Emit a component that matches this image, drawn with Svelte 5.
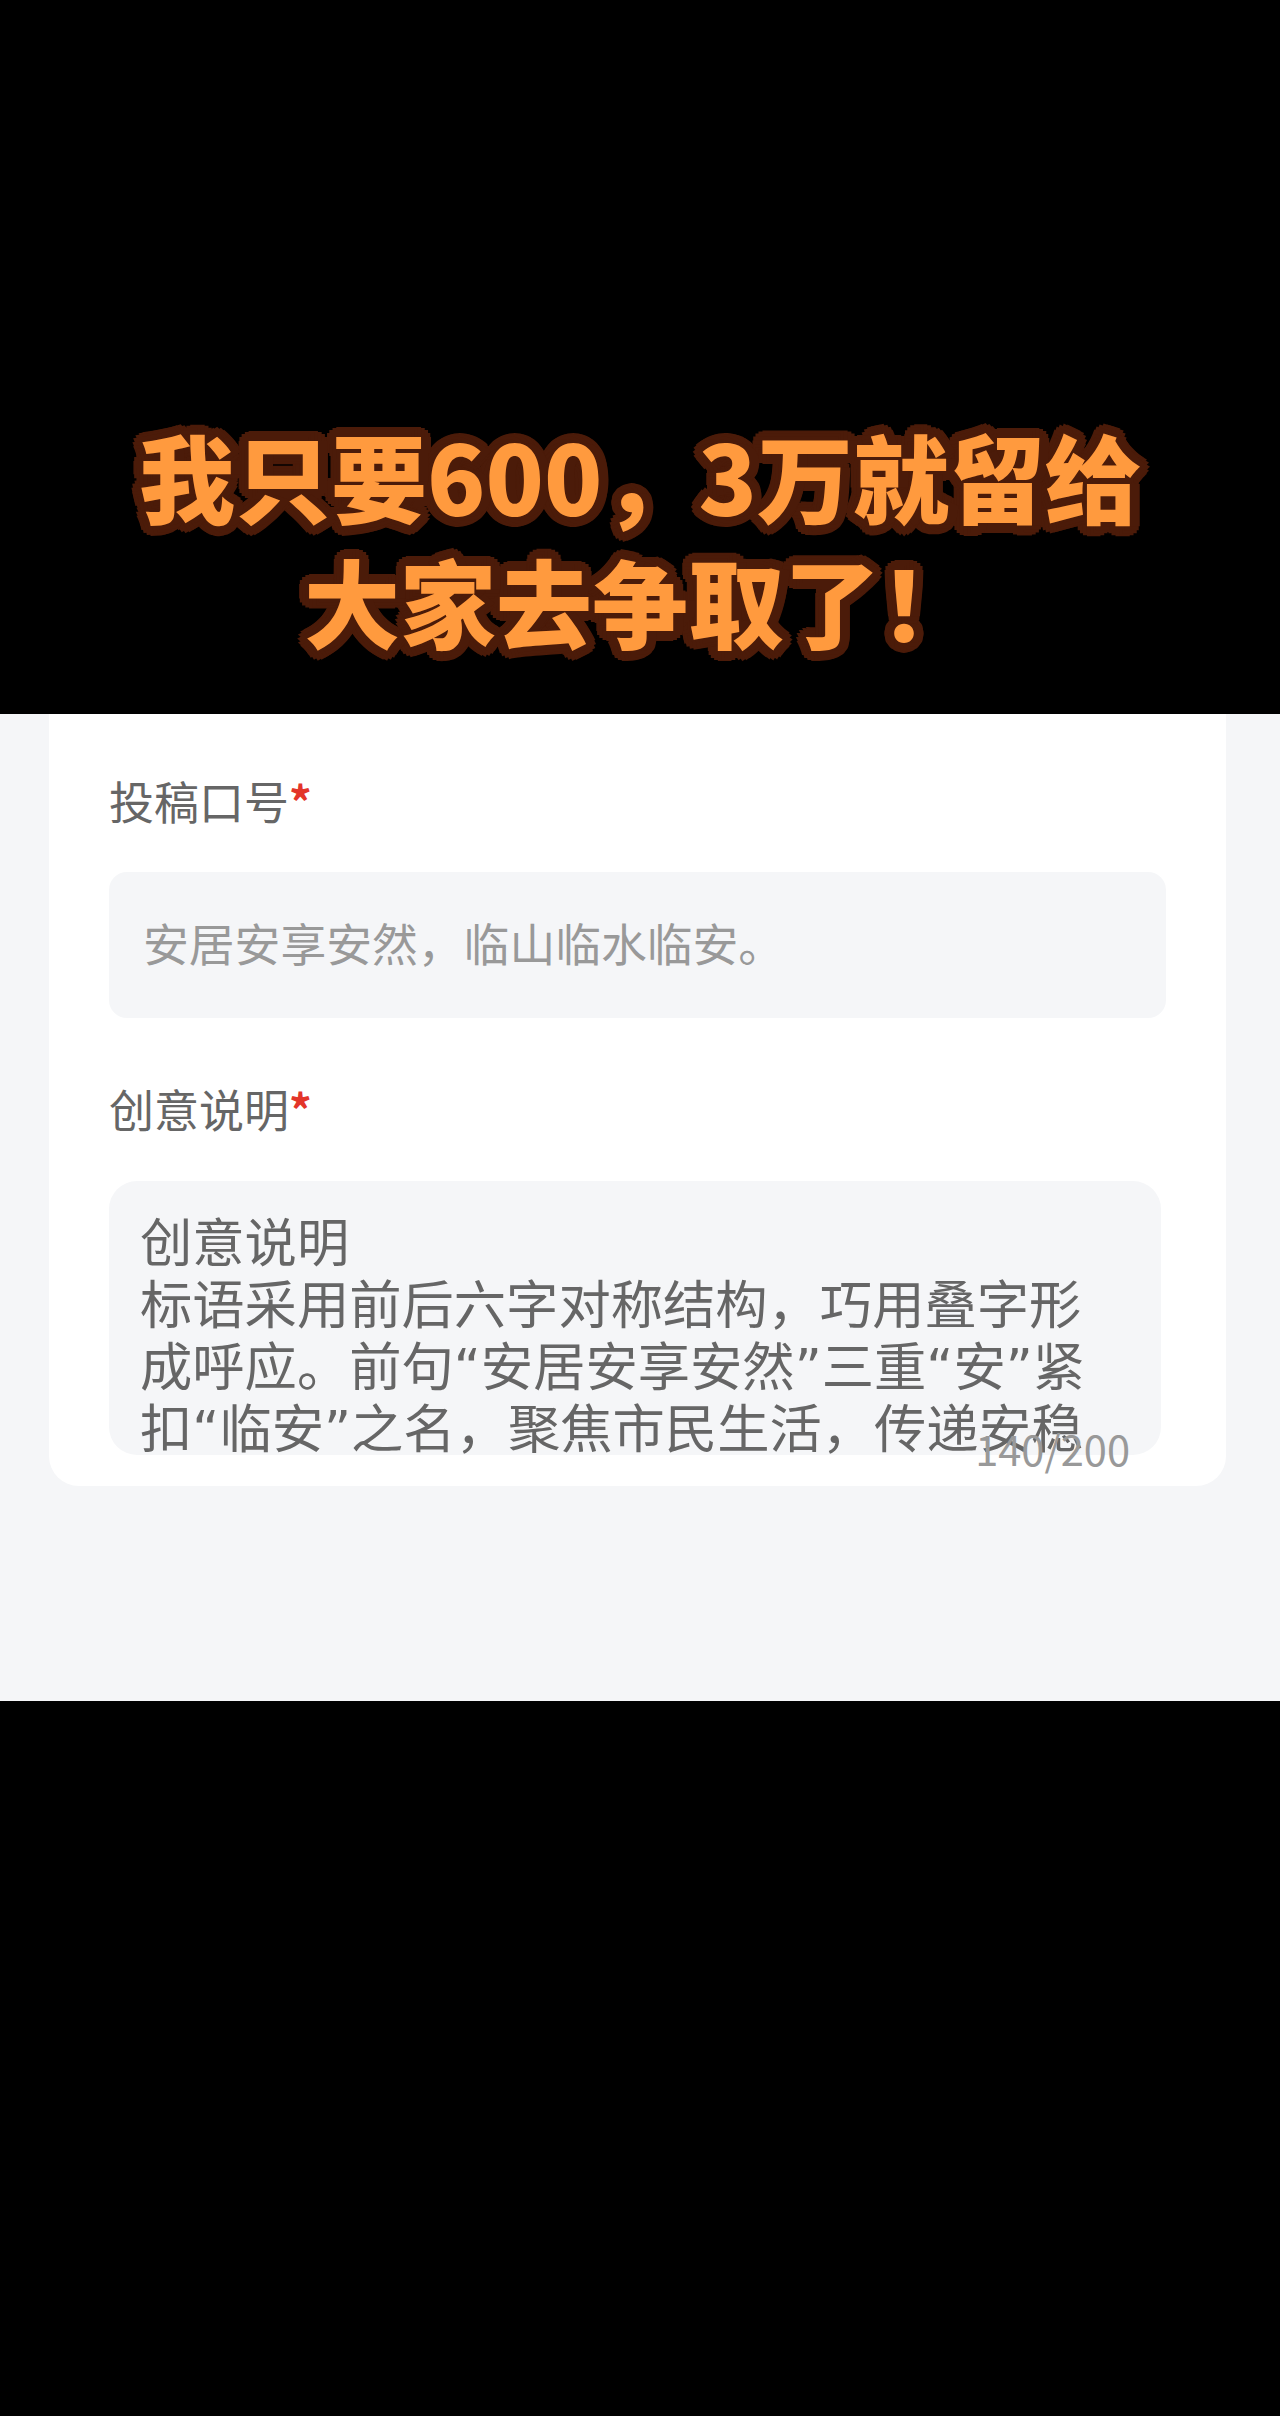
<script lang="ts">
	const slogan = '安居安享安然，临山临水临安。';
	const ideaLines = [
		'创意说明',
		'标语采用前后六字对称结构，巧用叠字形成呼应。前句“安居安享安然”三重“安”紧扣“临安”之名，聚焦市民生活，传递安稳'
	];
</script>

<div class="page">
	<header class="hero">
		<h1>我只要600，3万就留给<br />大家去争取了！</h1>
	</header>

	<section class="panel">
		<form class="card">
			<div class="label">投稿口号<span class="req">*</span></div>
			<div class="field"><span class="slogan">{slogan}</span></div>

			<div class="label second">创意说明<span class="req">*</span></div>
			<div class="area-wrap">
				<div class="area">
					{#each ideaLines as line}
						<div>{line}</div>
					{/each}
				</div>
				<span class="count">140/200</span>
			</div>
		</form>
	</section>
</div>

<style>
	:global(body) {
		background: #000;
	}

	.page {
		height: 2416px;
		background: #000;
		font-family: 'Noto Sans CJK SC', sans-serif;
	}

	.hero {
		height: 714px;
		box-sizing: border-box;
		padding-bottom: 52px;
		display: flex;
		align-items: flex-end;
		justify-content: center;
	}

	h1 {
		margin: 0;
		text-align: center;
		font-size: 96px;
		line-height: 125px;
		font-weight: 900;
		color: #ff9a3e;
		/* round outline, a text stroke gives spiky corners here */
		text-shadow:
			10px 0 0 #4b1b09, 9.2px 3.8px 0 #4b1b09, 7px 7px 0 #4b1b09, 3.8px 9.2px 0 #4b1b09,
			0 10px 0 #4b1b09, -3.8px 9.2px 0 #4b1b09, -7px 7px 0 #4b1b09, -9.2px 3.8px 0 #4b1b09,
			-10px 0 0 #4b1b09, -9.2px -3.8px 0 #4b1b09, -7px -7px 0 #4b1b09, -3.8px -9.2px 0 #4b1b09,
			0 -10px 0 #4b1b09, 3.8px -9.2px 0 #4b1b09, 7px -7px 0 #4b1b09, 9.2px -3.8px 0 #4b1b09,
			5px 0 0 #4b1b09, 0 5px 0 #4b1b09, -5px 0 0 #4b1b09, 0 -5px 0 #4b1b09;
	}

	.panel {
		height: 987px;
		background: #f5f6f8;
		padding: 0 54px 0 49px;
	}

	.card {
		background: #fff;
		padding: 56px 60px 31px;
		border-radius: 0 0 30px 30px;
	}

	.label {
		font-size: 45px;
		line-height: 62px;
		color: #666;
	}

	.label.second {
		margin-top: 60px;
	}

	.req {
		color: #e3352a;
		font-weight: 700;
	}

	.field {
		margin-top: 40px;
		height: 146px;
		padding-left: 34px;
		display: flex;
		align-items: center;
		background: #f5f6f8;
		border-radius: 18px;
		font-size: 45.8px;
		color: #999;
	}

	.slogan {
		margin-top: -6px;
	}

	.area-wrap {
		position: relative;
		margin-top: 41px;
		margin-right: 5px;
	}

	.area {
		height: 274px;
		box-sizing: border-box;
		padding: 32px 71px 0 31px;
		overflow: hidden;
		background: #f5f6f8;
		border-radius: 28px;
		font-family: 'DejaVu Sans', 'Noto Sans CJK SC', sans-serif;
		font-size: 52.3px;
		line-height: 62px;
		color: #666;
	}

	.count {
		position: absolute;
		right: 31px;
		top: 237px;
		font-size: 41.6px;
		line-height: 60px;
		color: #999;
	}
</style>
